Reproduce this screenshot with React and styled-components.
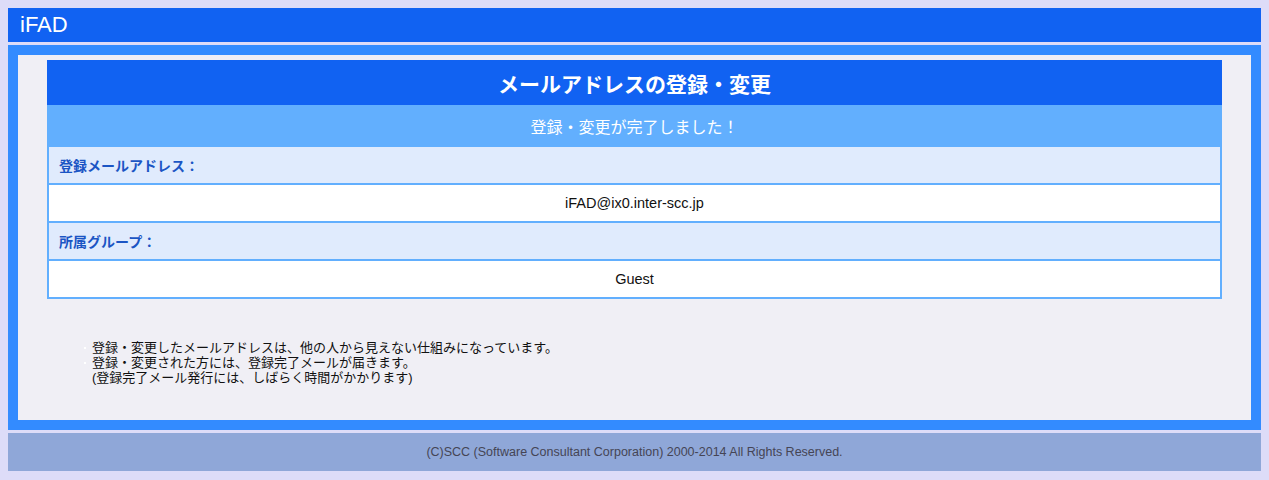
import React from 'react';
import styled, { createGlobalStyle } from 'styled-components';

const GlobalStyle = createGlobalStyle`
  body {
    margin: 8px;
    background-color: #dddcf8;
    font-family: "Liberation Sans", "Noto Sans CJK JP", sans-serif;
  }
`;

const Header = styled.header`
  height: 34px;
  background-color: #1162f2;
  color: #ffffff;
  font-size: 22px;
  line-height: 34px;
  padding-left: 12px;
`;

const Main = styled.main`
  margin-top: 3px;
  border: 10px solid #338bff;
  background-color: #f0eff5;
  padding: 5px 29px 35px;
`;

const Table = styled.div`
  display: flex;
  flex-direction: column;
`;

const Title = styled.div`
  height: 45px;
  background-color: #1162f2;
  color: #ffffff;
  font-size: 21px;
  font-weight: bold;
  display: flex;
  align-items: center;
  justify-content: center;
`;

const Status = styled.div`
  height: 42px;
  background-color: #62affe;
  color: #ffffff;
  font-size: 16px;
  display: flex;
  align-items: center;
  justify-content: center;
`;

const Cell = styled.div`
  height: 36px;
  border: 2px solid #62affe;
  border-top: none;
  display: flex;
  align-items: center;
  padding: 0 10px;
  justify-content: ${({ $label }) => ($label ? 'flex-start' : 'center')};
  background-color: ${({ $label }) => ($label ? '#e0ebfd' : '#ffffff')};
  color: ${({ $label }) => ($label ? '#1b55c4' : '#111111')};
  font-size: ${({ $label }) => ($label ? '14px' : '14.5px')};
  font-weight: ${({ $label }) => ($label ? 'bold' : 'normal')};
`;

const Notes = styled.ul`
  margin: 41px 0 0;
  padding-left: 45px;
  font-size: 13px;
  line-height: 15px;
  color: #111111;
  list-style: none;

  li {
    position: relative;
  }

  li.dot::before {
    content: '';
    position: absolute;
    left: -8px;
    top: 7px;
    width: 2px;
    height: 2px;
    background-color: #ffffff;
  }
`;

const Footer = styled.footer`
  margin-top: 3px;
  height: 38px;
  background-color: #8fa7d8;
  color: #454555;
  font-size: 12.5px;
  display: flex;
  align-items: center;
  justify-content: center;
`;

const rows = [
  { label: '登録メールアドレス：', value: 'iFAD@ix0.inter-scc.jp' },
  { label: '所属グループ：', value: 'Guest' },
];

const App = () => (
  <>
    <GlobalStyle />
    <Header>iFAD</Header>
    <Main>
      <Table>
        <Title>メールアドレスの登録・変更</Title>
        <Status>登録・変更が完了しました！</Status>
        {rows.map(row => (
          <React.Fragment key={row.label}>
            <Cell $label>{row.label}</Cell>
            <Cell>{row.value}</Cell>
          </React.Fragment>
        ))}
      </Table>
      <Notes>
        <li className="dot">登録・変更したメールアドレスは、他の人から見えない仕組みになっています。</li>
        <li className="dot">登録・変更された方には、登録完了メールが届きます。</li>
        <li>(登録完了メール発行には、しばらく時間がかかります)</li>
      </Notes>
    </Main>
    <Footer>(C)SCC (Software Consultant Corporation) 2000-2014 All Rights Reserved.</Footer>
  </>
);

export default App;
